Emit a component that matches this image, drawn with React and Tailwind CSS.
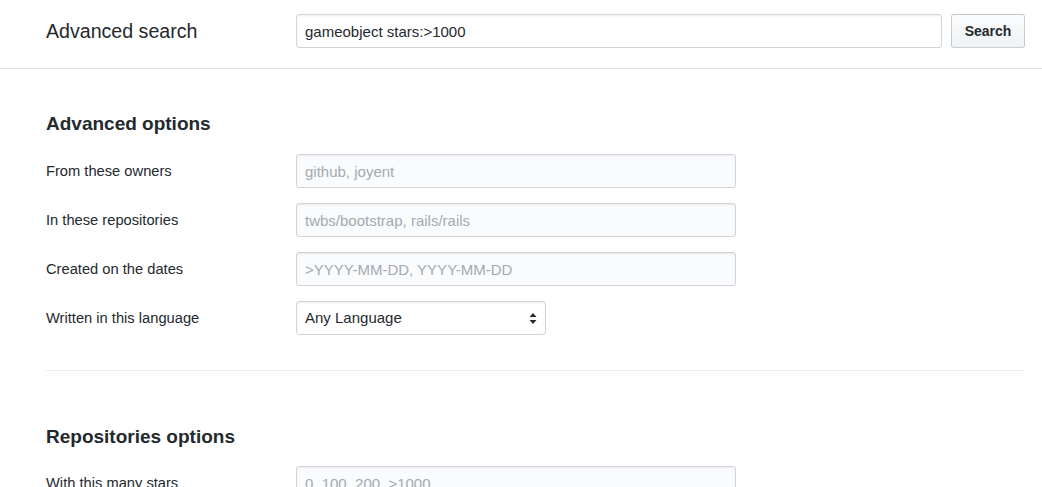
import React from 'react'

const font = { fontFamily: '"Liberation Sans", Arial, sans-serif' }

function Row({ label, placeholder }) {
  return (
    <div className="flex items-center h-[34px] mb-[15px]">
      <label className="w-[250px] shrink-0 text-[14.7px] text-[#24292e]">{label}</label>
      <input
        className="w-[440px] h-[34px] px-[8px] text-[15px] text-[#24292e] bg-[#fafbfc] border border-[#d1d5da] rounded-[3px] shadow-[inset_0_1px_2px_rgba(27,31,35,0.075)] placeholder:text-[#a3aab1] outline-none"
        placeholder={placeholder}
      />
    </div>
  )
}

export default function App() {
  return (
    <div className="bg-white min-h-screen text-[#24292e]" style={font}>
      {/* search bar */}
      <div className="border-b border-[#e1e4e8] h-[69px] flex items-start pt-[14px] pl-[46px] pr-[17px]">
        <h2 className="w-[250px] shrink-0 text-[19.6px] leading-[34px] font-normal">Advanced search</h2>
        <input
          className="flex-1 h-[34px] px-[8px] text-[15px] text-[#24292e] bg-white border border-[#d1d5da] rounded-[3px] shadow-[inset_0_1px_2px_rgba(27,31,35,0.075)] outline-none"
          defaultValue="gameobject stars:>1000"
        />
        <button className="ml-[9px] w-[74px] h-[34px] text-[14px] font-bold text-[#24292e] border border-[rgba(27,31,35,0.2)] rounded-[3px] bg-gradient-to-b from-[#fafbfc] to-[#eff3f6]">
          Search
        </button>
      </div>

      <div className="pl-[46px] pr-[17px]">
        <h3 className="text-[19px] font-bold leading-[24px] mt-[43px] mb-[18px]">Advanced options</h3>
        <Row label="From these owners" placeholder="github, joyent" />
        <Row label="In these repositories" placeholder="twbs/bootstrap, rails/rails" />
        <Row label="Created on the dates" placeholder=">YYYY-MM-DD, YYYY-MM-DD" />
        <div className="flex items-center h-[34px]">
          <label className="w-[250px] shrink-0 text-[14.7px]">Written in this language</label>
          <div className="relative w-[250px] h-[34px] border border-[#d1d5da] rounded-[3px] bg-white flex items-center px-[8px] text-[15px] shadow-[inset_0_1px_2px_rgba(27,31,35,0.075)]">
            <span>Any Language</span>
            <svg className="absolute right-[8px] top-[11px]" width="8" height="11" viewBox="0 0 8 11">
              <path d="M4 0L7.5 4H0.5Z M4 11L7.5 7H0.5Z" fill="#24292e" />
            </svg>
          </div>
        </div>

        <div className="border-t border-[#eaecef] mt-[35px]" />

        <h3 className="text-[19px] font-bold leading-[24px] mt-[54px] mb-[17px]">Repositories options</h3>
        <Row label="With this many stars" placeholder="0..100, 200, >1000" />
      </div>
    </div>
  )
}
